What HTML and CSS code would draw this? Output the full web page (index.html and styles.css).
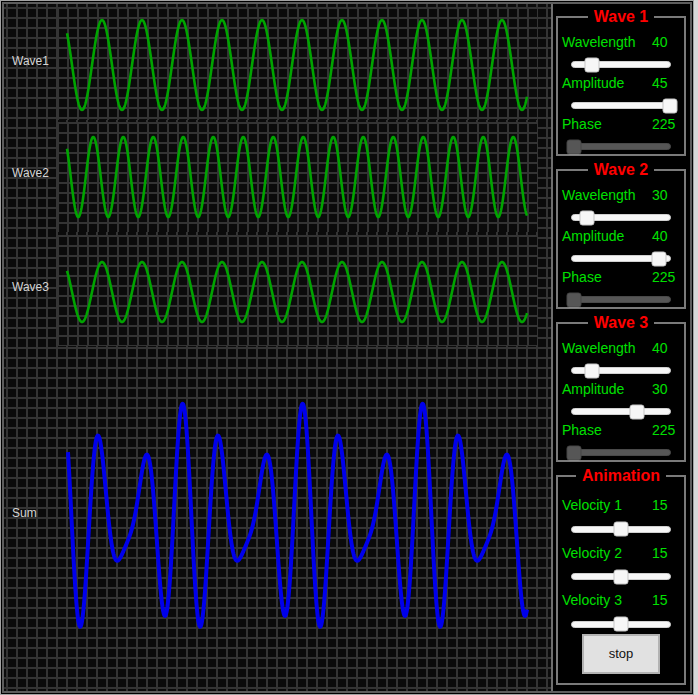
FILE: index.html
```html
<!DOCTYPE html>
<html>
<head>
<meta charset="utf-8">
<title>Waves</title>
<link rel="stylesheet" href="styles.css">
</head>
<body>
<div class="app">
  <div class="frame">
    <div class="plots">
      <div class="row r1">
        <div class="name">Wave1</div>
        <svg class="plot grid" data-waves="0" data-cy="58" data-start="10"><polyline class="curve wave"/></svg>
      </div>
      <div class="row r2">
        <div class="name">Wave2</div>
        <svg class="plot grid" data-waves="1" data-cy="55" data-start="10"><polyline class="curve wave"/></svg>
      </div>
      <div class="row r3">
        <div class="name">Wave3</div>
        <svg class="plot grid" data-waves="2" data-cy="57" data-start="10"><polyline class="curve wave"/></svg>
      </div>
      <div class="row rsum">
        <div class="name">Sum</div>
        <svg class="plot" data-waves="0,1,2" data-cy="171" data-start="11"><polyline class="curve sum"/></svg>
      </div>
    </div>

    <div class="panel">
      <fieldset class="group">
        <legend>Wave 1</legend>
        <div class="param"><span>Wavelength</span><span class="val">40</span></div>
        <div class="slider"><div class="track"><span class="thumb" style="left:20%"></span></div></div>
        <div class="param"><span>Amplitude</span><span class="val">45</span></div>
        <div class="slider"><div class="track"><span class="thumb" style="left:100%"></span></div></div>
        <div class="param"><span>Phase</span><span class="val">225</span></div>
        <div class="slider last disabled"><div class="track"><span class="thumb" style="left:2.5%"></span></div></div>
      </fieldset>

      <fieldset class="group">
        <legend>Wave 2</legend>
        <div class="param"><span>Wavelength</span><span class="val">30</span></div>
        <div class="slider"><div class="track"><span class="thumb" style="left:15%"></span></div></div>
        <div class="param"><span>Amplitude</span><span class="val">40</span></div>
        <div class="slider"><div class="track"><span class="thumb" style="left:88.9%"></span></div></div>
        <div class="param"><span>Phase</span><span class="val">225</span></div>
        <div class="slider last disabled"><div class="track"><span class="thumb" style="left:2.5%"></span></div></div>
      </fieldset>

      <fieldset class="group">
        <legend>Wave 3</legend>
        <div class="param"><span>Wavelength</span><span class="val">40</span></div>
        <div class="slider"><div class="track"><span class="thumb" style="left:20%"></span></div></div>
        <div class="param"><span>Amplitude</span><span class="val">30</span></div>
        <div class="slider"><div class="track"><span class="thumb" style="left:66.7%"></span></div></div>
        <div class="param"><span>Phase</span><span class="val">225</span></div>
        <div class="slider last disabled"><div class="track"><span class="thumb" style="left:2.5%"></span></div></div>
      </fieldset>

      <fieldset class="group anim">
        <legend>Animation</legend>
        <div class="param"><span>Velocity 1</span><span class="val">15</span></div>
        <div class="slider tall"><div class="track"><span class="thumb" style="left:50%"></span></div></div>
        <div class="param"><span>Velocity 2</span><span class="val">15</span></div>
        <div class="slider tall"><div class="track"><span class="thumb" style="left:50%"></span></div></div>
        <div class="param"><span>Velocity 3</span><span class="val">15</span></div>
        <div class="slider tall last"><div class="track"><span class="thumb" style="left:50%"></span></div></div>
        <button class="stop" type="button">stop</button>
      </fieldset>
    </div>
  </div>
</div>
<script src="script.js"></script>
</body>
</html>
```

FILE: styles.css
```css
html, body {
  margin: 0;
  padding: 0;
}
body {
  background: #d8d8d8;
  font-family: "Liberation Sans", Arial, sans-serif;
}
.app {
  width: 694px;
  height: 695px;
  box-sizing: border-box;
  border: 1px solid #a3a3a3;
  padding: 1px;
  background: #000;
}
.frame {
  display: flex;
  height: 100%;
  box-sizing: border-box;
  border: 2px solid #5d5d5d;
}

/* plots */
.plots {
  width: 549px;
  box-sizing: border-box;
  border-right: 2px solid #6e6e6e;
  padding-top: 3px;
  display: flex;
  flex-direction: column;
  background-color: #0b0b0b;
  background-image:
    linear-gradient(to right, #343434 2px, transparent 2px),
    linear-gradient(to bottom, #343434 2px, transparent 2px);
  background-size: 10px 10px;
  background-position: 2px 3px;
}
.row {
  display: flex;
  align-items: center;
}
.r1 { height: 113px; }
.r2 { height: 110px; margin-top: 2px; }
.r3 { height: 111px; margin-top: 3px; }
.rsum { flex: 1; margin-top: 1px; }
.name {
  width: 53px;
  box-sizing: border-box;
  padding-left: 8px;
  padding-bottom: 8px;
  font-size: 12px;
  color: #d4d4d4;
}
.r1 .name { padding-bottom: 5px; }
.rsum .name { padding-bottom: 12px; }
.plot {
  display: block;
  width: 480px;
  height: 100%;
  overflow: visible;
}
.plot.grid {
  background-color: #0b0b0b;
  background-image:
    linear-gradient(to right, #343434 2px, transparent 2px),
    linear-gradient(to bottom, #343434 2px, transparent 2px);
  background-size: 10px 10px;
  background-position: 0 0;
}
.curve {
  fill: none;
  stroke-linejoin: round;
}
.curve.wave {
  stroke: #00a400;
  stroke-width: 2.6;
}
.curve.sum {
  stroke: #0000ec;
  stroke-width: 4;
}

/* panel */
.panel {
  flex: 1;
  display: flex;
  flex-direction: column;
  gap: 5.5px;
  padding-top: 4px;
}
.group {
  margin: 0 4px 0 3px;
  padding: 6.5px 4px 0 4px;
  border: 2px solid #7a7a7a;
  min-width: 0;
}
.group legend {
  margin: 0 auto;
  padding: 0 6px;
  font-size: 16px;
  line-height: 18px;
  font-weight: bold;
  color: #ff0000;
}
.param {
  display: grid;
  grid-template-columns: 90px auto;
  height: 19px;
  align-items: center;
  font-size: 14px;
  color: #00e000;
}
.slider {
  height: 22px;
  box-sizing: border-box;
  padding: 9.5px 0 0 9px;
}
.slider.last {
  height: 20px;
}
.track {
  position: relative;
  width: 100px;
  height: 7px;
  box-sizing: border-box;
  background: #f7f7f7;
  border: 1px solid #d0d0d0;
  border-radius: 4px;
}
.thumb {
  position: absolute;
  top: 50%;
  width: 15px;
  height: 15px;
  box-sizing: border-box;
  transform: translate(-50%, -50%);
  background: #f6f6f6;
  border: 1px solid #c5c5c5;
  border-radius: 3px;
}
.slider.disabled {
  opacity: 0.35;
}
.anim {
  padding-top: 10.5px;
  padding-bottom: 9px;
}
.slider.tall {
  height: 28.5px;
  padding-top: 11px;
}
.slider.tall.last {
  height: 24px;
}
.stop {
  display: block;
  margin: 0 auto;
  width: 78px;
  height: 40px;
  box-sizing: border-box;
  background: #e1e1e1;
  border: 2px solid #b2b2b2;
  border-radius: 0;
  font-family: "Liberation Sans", Arial, sans-serif;
  font-size: 13px;
  color: #111;
  padding: 0;
}
```

FILE: script.js
```js
var waves = [
  { a: 45, l: 40, p: 225 },
  { a: 40, l: 30, p: 225 },
  { a: 30, l: 40, p: 225 }
];
document.querySelectorAll('.plot').forEach(function (svg) {
  var ids = svg.getAttribute('data-waves').split(',').map(Number);
  var cy = Number(svg.getAttribute('data-cy'));
  var start = Number(svg.getAttribute('data-start'));
  var pts = [];
  for (var x = start; x <= 470; x += 0.5) {
    var s = 0;
    ids.forEach(function (i) {
      var w = waves[i];
      s += w.a * Math.sin(w.p * Math.PI / 180 - 2 * Math.PI * (x - 10) / w.l);
    });
    pts.push(x.toFixed(1) + ',' + (cy + s).toFixed(2));
  }
  svg.querySelector('polyline').setAttribute('points', pts.join(' '));
});
```
